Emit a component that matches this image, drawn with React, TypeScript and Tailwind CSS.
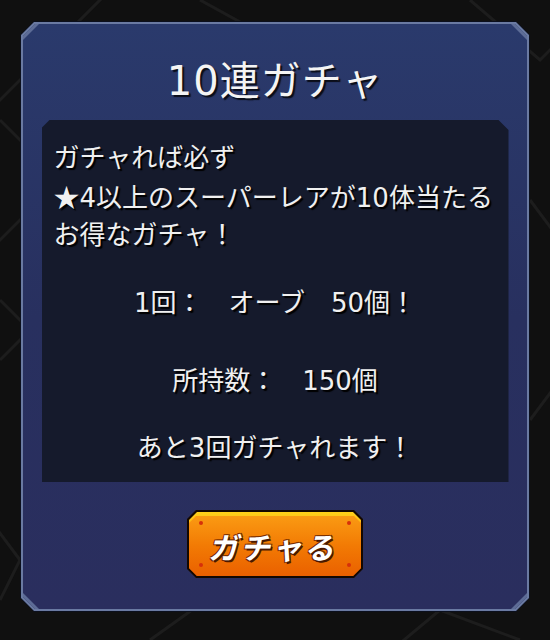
import React from "react";

const font = { fontFamily: '"DejaVu Sans", "Noto Sans CJK JP", "Noto Sans", sans-serif' };

function Corner({ className, points }: { className: string; points: string }) {
  return (
    <svg className={`absolute ${className}`} width="16" height="16" viewBox="0 0 16 16">
      <polygon points={points} fill="#5d6c96" />
    </svg>
  );
}

export default function App() {
  return (
    <div
      className="relative w-[550px] h-[640px] overflow-hidden bg-[#101010] pt-[21px] pl-[20px]"
      style={font}
    >
      <svg className="absolute inset-0" width="550" height="640" viewBox="0 0 550 640">
        <g stroke="#1d1d1d" strokeWidth="3" fill="none">
          <path d="M-20 120 L120 -20" />
          <path d="M-20 260 L60 180 L0 120" />
          <path d="M0 360 L30 330 L0 300" />
          <path d="M-10 520 L20 560 L0 600" />
          <path d="M150 640 L220 590" />
          <path d="M380 660 L440 610 L520 640" />
          <path d="M470 0 L540 60 L570 30" />
          <path d="M530 200 L560 240" />
          <path d="M530 420 L560 380" />
          <path d="M200 0 L240 22" />
        </g>
      </svg>

      {/* panel */}
      <div className="relative w-[510px] h-[591px] bg-[#0b0f1c] p-[1px] [clip-path:polygon(14px_0,calc(100%-14px)_0,100%_14px,100%_calc(100%-14px),calc(100%-14px)_100%,14px_100%,0_calc(100%-14px),0_14px)]">
        <div className="w-full h-full bg-[#6a7aa2] p-[2px] [clip-path:polygon(13px_0,calc(100%-13px)_0,100%_13px,100%_calc(100%-13px),calc(100%-13px)_100%,13px_100%,0_calc(100%-13px),0_13px)]">
          <div className="relative w-full h-full bg-gradient-to-b from-[#2a3a6c] via-[#28305f] to-[#2a2e5e] flex flex-col items-center [clip-path:polygon(12px_0,calc(100%-12px)_0,100%_12px,100%_calc(100%-12px),calc(100%-12px)_100%,12px_100%,0_calc(100%-12px),0_12px)]">
            <Corner className="left-0 top-0" points="0,0 16,0 0,16" />
            <Corner className="right-0 top-0" points="0,0 16,0 16,16" />
            <Corner className="left-0 bottom-0" points="0,0 16,16 0,16" />
            <Corner className="right-0 bottom-0" points="16,0 16,16 0,16" />

            {/* title */}
            <div className="mt-[33px] h-[48px] flex items-center text-[40px] leading-none text-[#f4f4f4] [text-shadow:2px_2px_1px_#0a0d18] tracking-[1px]">
              10連ガチャ
            </div>

            {/* info box */}
            <div className="mt-[15px] w-[467px] h-[362px] bg-[#151a2c] pt-[20px] px-[12px] text-[26px] leading-[37px] text-[#f0f0f0] [text-shadow:2px_2px_1px_#000] [clip-path:polygon(8px_0,calc(100%-10px)_0,100%_10px,100%_100%,0_100%,0_8px)]">
              <div className="whitespace-nowrap">ガチャれば必ず</div>
              <div className="whitespace-nowrap">
                <span className="[font-family:'Noto_Sans_CJK_JP',sans-serif]">★</span>4以上のスーパーレアが10体当たる
              </div>
              <div className="whitespace-nowrap">お得なガチャ！</div>
              <div className="mt-[31px] text-center whitespace-pre">1回：　オーブ　50個！</div>
              <div className="mt-[41px] text-center whitespace-pre">所持数：　150個</div>
              <div className="mt-[30px] text-center whitespace-pre">あと3回ガチャれます！</div>
            </div>

            {/* button */}
            <div className="mt-[28px] w-[176px] h-[68px] bg-[#140800] p-[2px] [clip-path:polygon(9px_0,calc(100%-9px)_0,100%_9px,100%_calc(100%-9px),calc(100%-9px)_100%,9px_100%,0_calc(100%-9px),0_9px)]">
              <div className="relative w-full h-full bg-gradient-to-b from-[#ffd21a] via-[#f58a06] to-[#e85a00] pt-[4px] [clip-path:polygon(8px_0,calc(100%-8px)_0,100%_8px,100%_calc(100%-8px),calc(100%-8px)_100%,8px_100%,0_calc(100%-8px),0_8px)]">
                <div className="w-full h-full bg-gradient-to-b from-[#fa9a12] via-[#f27a04] to-[#ea6000] flex items-center justify-center [clip-path:polygon(7px_0,calc(100%-7px)_0,100%_7px,100%_calc(100%-7px),calc(100%-7px)_100%,7px_100%,0_calc(100%-7px),0_7px)]">
                  <span className="-skew-x-12 text-[30px] font-bold leading-none text-white tracking-[2px] [font-family:'Noto_Sans_CJK_JP',sans-serif] [text-shadow:2px_2px_0_#4a1800,-1px_-1px_0_#7a3000,1px_-1px_0_#7a3000,-1px_1px_0_#7a3000]">
                    ガチャる
                  </span>
                </div>
                <span className="absolute left-[10px] top-[9px] w-[4px] h-[4px] rounded-full bg-[#d6300a]" />
                <span className="absolute right-[10px] top-[9px] w-[4px] h-[4px] rounded-full bg-[#d6300a]" />
                <span className="absolute left-[10px] bottom-[9px] w-[4px] h-[4px] rounded-full bg-[#d6300a]" />
                <span className="absolute right-[10px] bottom-[9px] w-[4px] h-[4px] rounded-full bg-[#d6300a]" />
              </div>
            </div>
          </div>
        </div>
      </div>
    </div>
  );
}
